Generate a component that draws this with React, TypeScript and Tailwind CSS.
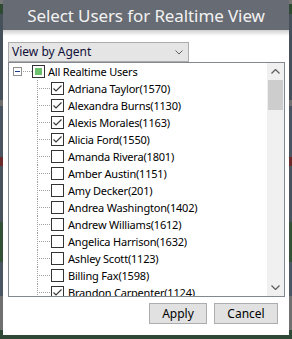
import React from "react";

const users = [
  { name: "Adriana Taylor(1570)", checked: true },
  { name: "Alexandra Burns(1130)", checked: true },
  { name: "Alexis Morales(1163)", checked: true },
  { name: "Alicia Ford(1550)", checked: true },
  { name: "Amanda Rivera(1801)", checked: false },
  { name: "Amber Austin(1151)", checked: false },
  { name: "Amy Decker(201)", checked: false },
  { name: "Andrea Washington(1402)", checked: false },
  { name: "Andrew Williams(1612)", checked: false },
  { name: "Angelica Harrison(1632)", checked: false },
  { name: "Ashley Scott(1123)", checked: false },
  { name: "Billing Fax(1598)", checked: false },
  { name: "Brandon Carpenter(1124)", checked: true },
];

const font = { fontFamily: '"Noto Sans", "Open Sans", Arial, sans-serif' };

function CheckBox({ checked }: { checked: boolean }) {
  return (
    <div className="w-[13px] h-[13px] border border-[#333333] bg-white shrink-0 flex items-center justify-center">
      {checked && (
        <svg width="11" height="11" viewBox="0 0 11 11">
          <path d="M1.5 5.5 L4 8 L9.5 2.5" fill="none" stroke="#3a3a3a" strokeWidth="1.2" />
        </svg>
      )}
    </div>
  );
}

function Row({ name, checked }: { name: string; checked: boolean }) {
  return (
    <div className="flex items-center h-[17px] pl-[28px] shrink-0">
      <svg width="14" height="17" className="shrink-0">
        <line x1="0.5" y1="0" x2="0.5" y2="17" stroke="#a0a0a0" strokeDasharray="1 1" />
        <line x1="2" y1="8.5" x2="13" y2="8.5" stroke="#a0a0a0" strokeDasharray="1 1" />
      </svg>
      <CheckBox checked={checked} />
      <span className="ml-[4px] text-[11px] tracking-[-0.2px] text-black whitespace-nowrap leading-none">{name}</span>
    </div>
  );
}

export default function App() {
  return (
    <div
      className="w-[292px] h-[339px] pl-[3px] pr-[3px] pb-[4px] bg-[linear-gradient(to_bottom,#767676_0px,#767676_4px,#2f4a32_4px,#2f4a32_14px,#46505a_14px,#46505a_100px,#6d6d6d_100px,#6d6d6d_106px,#4a5561_106px,#4a5561_157px,#6b2a2a_157px,#6b2a2a_166px,#48535e_166px,#48535e_222px,#335237_222px,#335237_262px,#4b5663_262px,#4b5663_296px,#707070_296px,#707070_330px,#2e4a36_330px)]"
      style={font}
    >
      <div className="w-[286px] h-[335px] bg-white flex flex-col">
        <div className="h-[30px] bg-[#676b73] flex items-center justify-center shrink-0">
          <span className="text-[17px] tracking-[-0.1px] text-[#f2f2f2] leading-none whitespace-nowrap">Select Users for Realtime View</span>
        </div>
        <div className="h-[6px] bg-[linear-gradient(to_bottom,#cfcfcf,#ffffff)] shrink-0" />
        <div className="pl-[5px] pt-[6px] flex flex-col shrink-0">
          <div className="w-[181px] h-[20px] bg-[#e5e5e5] border border-[#acacac] flex items-center justify-between pl-[3px] pr-[5px]">
            <span className="text-[12px] text-[#10103a] leading-none">View by Agent</span>
            <svg width="8" height="5" viewBox="0 0 8 5">
              <path d="M0.5 0.5 L4 4 L7.5 0.5" fill="none" stroke="#606060" strokeWidth="1" />
            </svg>
          </div>
          <div className="w-[277px] h-[235px] border border-[#828790] bg-white flex overflow-hidden">
            <div className="flex-1 flex flex-col overflow-hidden">
              <div className="flex items-center h-[17px] pl-[4px] shrink-0">
                <div className="w-[9px] h-[9px] border border-[#8f8f8f] bg-white flex items-center justify-center shrink-0">
                  <div className="w-[5px] h-[1px] bg-[#1e3a8a]" />
                </div>
                <svg width="10" height="17" className="shrink-0">
                  <line x1="1" y1="8.5" x2="10" y2="8.5" stroke="#a0a0a0" strokeDasharray="1 1" />
                </svg>
                <div className="w-[13px] h-[13px] border border-[#333333] bg-white shrink-0 flex items-center justify-center">
                  <div className="w-[7px] h-[7px] bg-[#6cc16c]" />
                </div>
                <span className="ml-[3px] text-[11px] tracking-[-0.2px] text-black whitespace-nowrap leading-none">All Realtime Users</span>
              </div>
              {users.map((u) => (
                <Row key={u.name} name={u.name} checked={u.checked} />
              ))}
            </div>
            <div className="w-[17px] bg-[#f0f0f0] flex flex-col shrink-0">
              <div className="h-[17px] flex items-center justify-center shrink-0">
                <svg width="9" height="5" viewBox="0 0 9 5">
                  <path d="M0.5 4.5 L4.5 0.5 L8.5 4.5" fill="none" stroke="#606060" strokeWidth="1.3" />
                </svg>
              </div>
              <div className="mx-[1px] h-[30px] bg-[#cdcdcd] shrink-0" />
              <div className="flex-1" />
              <div className="h-[17px] flex items-center justify-center shrink-0">
                <svg width="9" height="5" viewBox="0 0 9 5">
                  <path d="M0.5 0.5 L4.5 4.5 L8.5 0.5" fill="none" stroke="#606060" strokeWidth="1.3" />
                </svg>
              </div>
            </div>
          </div>
        </div>
        <div className="flex justify-end gap-[7px] pr-[11px] pt-[6px]">
          <button className="w-[58px] h-[21px] bg-[#e1e1e1] border border-[#adadad] text-[12px] text-black leading-none">Apply</button>
          <button className="w-[64px] h-[21px] bg-[#e1e1e1] border border-[#adadad] text-[12px] text-black leading-none">Cancel</button>
        </div>
      </div>
    </div>
  );
}
